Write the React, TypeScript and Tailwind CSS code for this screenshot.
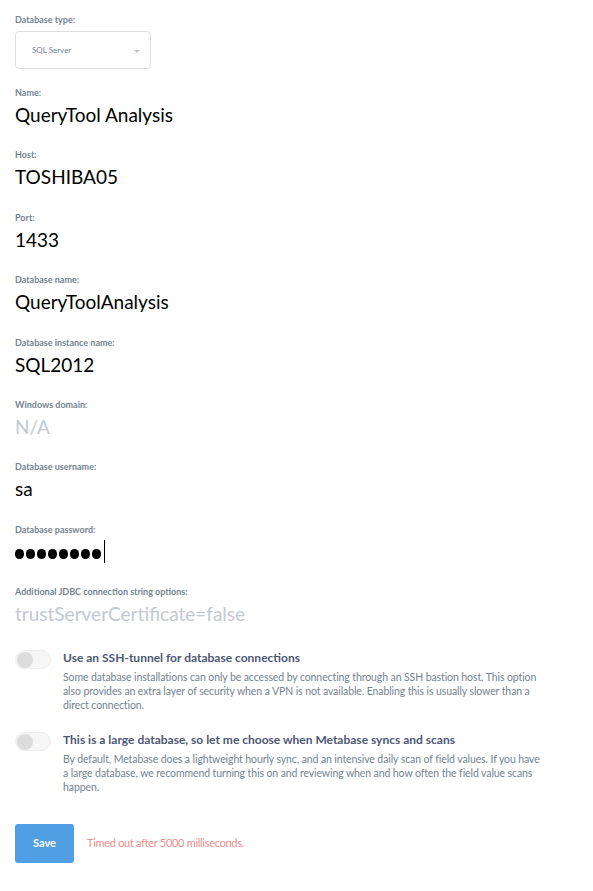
const font = { fontFamily: 'Lato, "Open Sans", sans-serif' };

type Field = { label: string; value: string; muted?: boolean };

const fields: Field[] = [
  { label: 'Name:', value: 'QueryTool Analysis' },
  { label: 'Host:', value: 'TOSHIBA05' },
  { label: 'Port:', value: '1433' },
  { label: 'Database name:', value: 'QueryToolAnalysis' },
  { label: 'Database instance name:', value: 'SQL2012' },
  { label: 'Windows domain:', value: 'N/A', muted: true },
  { label: 'Database username:', value: 'sa' },
];

function Label({ children }: { children: React.ReactNode }) {
  return (
    <div className="text-[9px] leading-[12px] font-bold text-[#74838f]">
      {children}
    </div>
  );
}

function Toggle() {
  return (
    <div className="mt-[1px] flex h-[19px] w-[36px] shrink-0 items-center rounded-full border border-[#eeeeee] bg-[#f6f6f6] px-[1px]">
      <div className="h-[16px] w-[16px] rounded-full bg-[#dcdcdc]" />
    </div>
  );
}

function Option({ title, desc }: { title: string; desc: string }) {
  return (
    <div className="flex gap-[12px]">
      <Toggle />
      <div>
        <div className="text-[12px] leading-[18px] font-bold text-[#4c5773]">
          {title}
        </div>
        <p className="mt-[3px] max-w-[483px] text-[10.5px] leading-[14px] tracking-[-0.1px] text-[#74838f]">
          {desc}
        </p>
      </div>
    </div>
  );
}

export default function App() {
  return (
    <div className="min-h-screen bg-white px-[15px] pt-[14px]" style={font}>
      <Label>Database type:</Label>
      <div className="mt-[5px] flex h-[38px] w-[136px] items-center justify-between rounded-[4px] border border-[#dedede] pl-4 pr-2.5">
        <span className="text-[8px] text-[#74838f]">SQL Server</span>
        <svg width="6" height="4" viewBox="0 0 6 4" className="mt-1">
          <path d="M0 0 L6 0 L3 3 Z" fill="#c5c5c5" />
        </svg>
      </div>

      <div className="mt-[18px] flex flex-col gap-[22.4px]">
        {fields.map(f => (
          <div key={f.label}>
            <Label>{f.label}</Label>
            <div
              className={`mt-[4px] text-[19px] leading-[24px] ${
                f.muted ? 'text-[#c4c9cf]' : 'text-black'
              }`}
            >
              {f.value}
            </div>
          </div>
        ))}

        <div>
          <Label>Database password:</Label>
          <div className="mt-[4px] flex h-[24px] items-end gap-[2px]">
            {Array.from({ length: 8 }).map((_, i) => (
              <div
                key={i}
                className="mb-[5px] h-[10px] w-[9px] rounded-full bg-black"
              />
            ))}
            <div className="ml-[1px] mb-[1px] h-[23px] w-[1px] bg-black" />
          </div>
        </div>

        <div>
          <Label>Additional JDBC connection string options:</Label>
          <div className="mt-[4px] text-[19px] leading-[24px] text-[#c4c9cf]">
            trustServerCertificate=false
          </div>
        </div>
      </div>

      <div className="mt-[23px] flex flex-col gap-[19px]">
        <Option
          title="Use an SSH-tunnel for database connections"
          desc="Some database installations can only be accessed by connecting through an SSH bastion host. This option also provides an extra layer of security when a VPN is not available. Enabling this is usually slower than a direct connection."
        />
        <Option
          title="This is a large database, so let me choose when Metabase syncs and scans"
          desc="By default, Metabase does a lightweight hourly sync, and an intensive daily scan of field values. If you have a large database, we recommend turning this on and reviewing when and how often the field value scans happen."
        />
      </div>

      <div className="mt-[30px] flex items-center gap-[13px]">
        <button className="h-[39px] w-[59px] rounded-[3px] bg-[#509ee3] text-[11px] font-bold text-white">
          Save
        </button>
        <span className="text-[11px] tracking-[-0.3px] text-[#ef8c8c]">
          Timed out after 5000 milliseconds.
        </span>
      </div>
    </div>
  );
}
